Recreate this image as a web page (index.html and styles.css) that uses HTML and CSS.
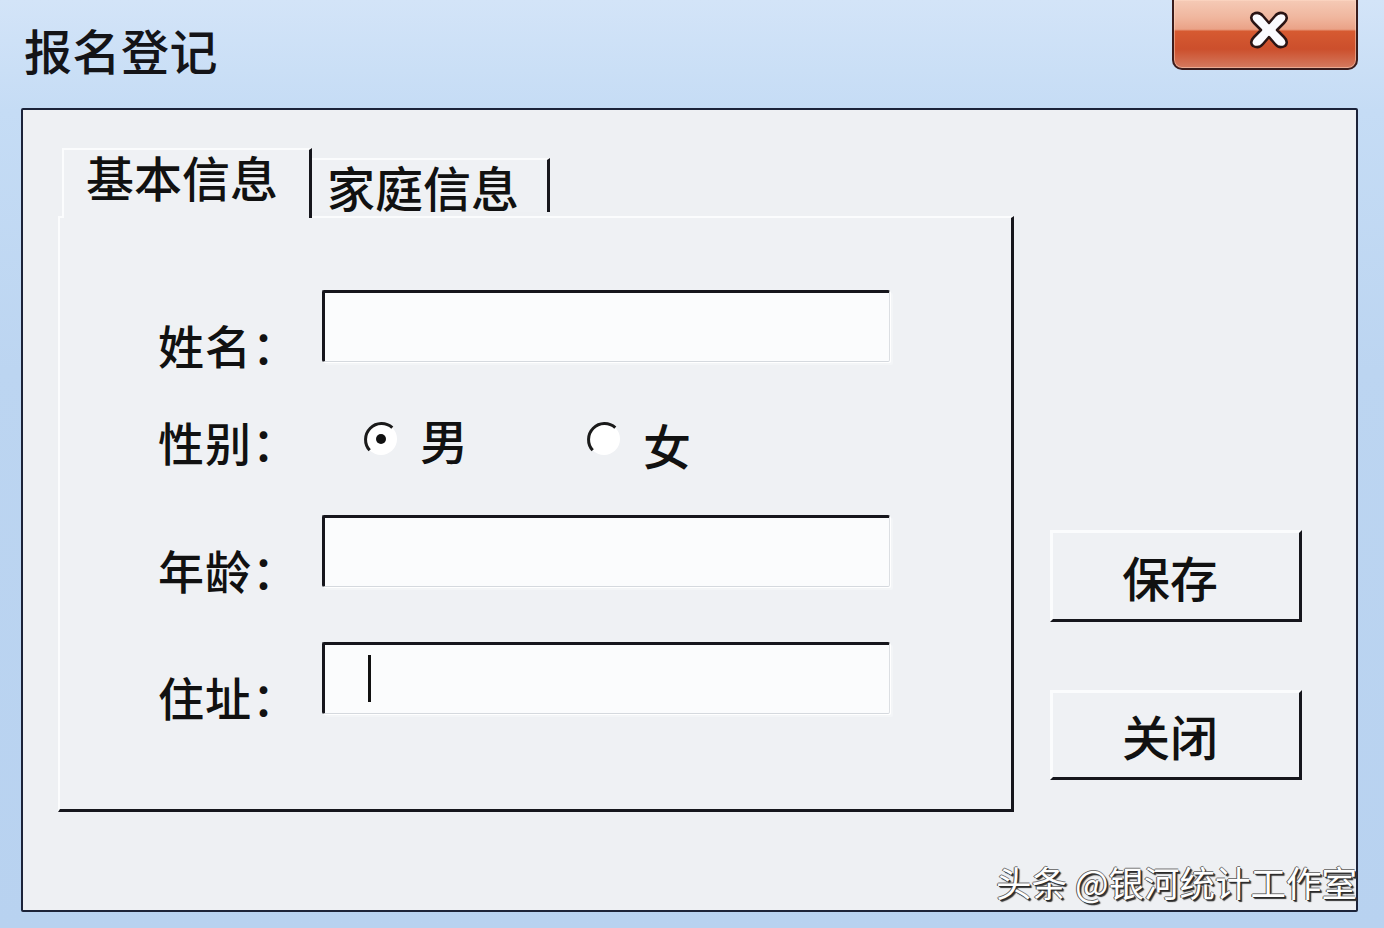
FILE: index.html
```html
<!DOCTYPE html>
<html lang="zh-CN">
<head>
<meta charset="utf-8">
<title>报名登记</title>
<link rel="stylesheet" href="styles.css">
</head>
<body>
<div class="window">
  <div class="titlebar">
    <div class="title">报名登记</div>
    <div class="close">
      <svg class="close-x" width="48" height="42" viewBox="0 0 48 42">
        <path d="M8 5 Q14 2 18 7 L24 14 L30 7 Q34 2 40 5 Q44 9 39 14 L32 21 L39 28 Q44 33 40 37 Q34 40 30 35 L24 28 L18 35 Q14 40 8 37 Q4 33 9 28 L16 21 L9 14 Q4 9 8 5 Z" fill="#fbfbff" stroke="#2a1414" stroke-width="2.5" stroke-linejoin="round"/>
      </svg>
    </div>
  </div>
  <div class="client">
    <div class="left">
      <div class="tabs">
        <div class="tab tab-active">基本信息</div>
        <div class="tab tab-inactive">家庭信息</div>
      </div>
      <div class="panel">
        <div class="form">
          <div class="label label-field">姓名：</div>
          <div class="field"></div>

          <div class="label">性别：</div>
          <div class="radios">
            <div class="option">
              <svg class="radio" width="38" height="38" viewBox="0 0 38 38">
                <circle cx="19" cy="19" r="16" fill="#ffffff"/>
                <path d="M7.7 30.3 A16 16 0 0 1 30.3 7.7" fill="none" stroke="#1a1a1a" stroke-width="3"/>
                <circle cx="19" cy="19" r="5" fill="#111111"/>
              </svg>
              <span class="option-text">男</span>
            </div>
            <div class="option">
              <svg class="radio" width="38" height="38" viewBox="0 0 38 38">
                <circle cx="19" cy="19" r="16" fill="#ffffff"/>
                <path d="M7.7 30.3 A16 16 0 0 1 30.3 7.7" fill="none" stroke="#1a1a1a" stroke-width="3"/>
              </svg>
              <span class="option-text option-text-low">女</span>
            </div>
          </div>

          <div class="label label-field">年龄：</div>
          <div class="field"></div>

          <div class="label label-field">住址：</div>
          <div class="field"><span class="caret"></span></div>
        </div>
      </div>
    </div>
    <div class="buttons">
      <div class="btn">保存</div>
      <div class="btn btn-close">关闭</div>
    </div>
  </div>
</div>
<div class="watermark">头条 @银河统计工作室</div>
</body>
</html>
```

FILE: styles.css
```css
html, body {
  margin: 0;
  padding: 0;
}
body {
  width: 1384px;
  height: 928px;
  overflow: hidden;
  position: relative;
  background: linear-gradient(180deg, #d3e4f8 0%, #c5dcf5 12%, #bcd5f1 40%, #b8d2f0 100%);
  font-family: "Noto Sans CJK SC", "Noto Sans", sans-serif;
  color: #111111;
}
.window {
  box-sizing: border-box;
  height: 928px;
  display: flex;
  flex-direction: column;
  padding: 0 26px 16px 21px;
}
.titlebar {
  height: 108px;
  flex: none;
  display: flex;
  justify-content: space-between;
  align-items: flex-start;
}
.title {
  margin-top: 19px;
  margin-left: 3px;
  font-size: 48px;
  line-height: 60px;
  font-weight: 500;
  color: #141418;
  letter-spacing: 0.5px;
}
.close {
  box-sizing: border-box;
  width: 186px;
  height: 70px;
  border: 2px solid #3a1c1c;
  border-top: none;
  border-radius: 0 0 10px 10px;
  background: linear-gradient(180deg, #f5cab6 0%, #f0b79f 25%, #eaa287 43%, #d65a31 46%, #cc4f2c 72%, #d47a60 100%);
  display: flex;
  justify-content: center;
  align-items: center;
  box-shadow: inset 0 0 0 1px rgba(255, 220, 200, 0.5);
}
.close-x {
  margin-top: -8px;
  margin-left: 8px;
}
.client {
  flex: 1;
  box-sizing: border-box;
  border: 2px solid #1c2339;
  border-radius: 2px;
  background: #eef0f3;
  display: flex;
  padding: 38px 0 0 35px;
}
.left {
  width: 956px;
  display: flex;
  flex-direction: column;
}
.tabs {
  height: 68px;
  display: flex;
  align-items: flex-end;
  position: relative;
  z-index: 1;
}
.tab {
  box-sizing: border-box;
  font-size: 48px;
  font-weight: 500;
  line-height: 52px;
  color: #111111;
  background: #eff1f4;
  border-top: 2px solid #fbfcfd;
  border-right: 3px solid #16161c;
}
.tab-active {
  margin-left: 4px;
  width: 250px;
  height: 70px;
  margin-bottom: -2px;
  border-left: 2px solid #fbfcfd;
  padding-left: 22px;
}
.tab-inactive {
  width: 238px;
  height: 54px;
  padding-left: 15px;
  margin-bottom: 4px;
}
.panel {
  box-sizing: border-box;
  width: 956px;
  height: 596px;
  background: #eff1f4;
  border-top: 2px solid #fbfcfd;
  border-left: 2px solid #fbfcfd;
  border-right: 3px solid #16161c;
  border-bottom: 3px solid #16161c;
  padding: 72px 0 0 98px;
}
.form {
  display: grid;
  grid-template-columns: 164px 568px;
  grid-template-rows: 72px 43px 72px 72px;
  row-gap: 55px;
}
.label {
  font-size: 46px;
  font-weight: 500;
  line-height: 48px;
  color: #111111;
  white-space: nowrap;
  letter-spacing: 1px;
}
.label-field {
  padding-top: 30px;
}
.field {
  box-sizing: border-box;
  height: 72px;
  background: #fbfcfd;
  border-top: 3px solid #16161c;
  border-left: 3px solid #16161c;
  border-right: 1px solid #dcdfe3;
  border-bottom: 1px solid #d5d9de;
  border-radius: 2px;
  box-shadow: 1px 1px 0 #ffffff, 3px 3px 0 #f3f5f7;
  padding: 10px 0 0 43px;
}
.caret {
  display: block;
  width: 3px;
  height: 47px;
  background: #111111;
}
.radios {
  display: flex;
  align-items: center;
}
.option {
  display: flex;
  align-items: center;
}
.option:first-child {
  margin-left: 40px;
  width: 223px;
}
.radio {
  flex: none;
}
.option-text {
  margin-left: 20px;
  font-size: 48px;
  line-height: 48px;
  font-weight: 500;
}
.option-text-low {
  margin-top: 10px;
}
.buttons {
  display: flex;
  flex-direction: column;
  margin-left: 36px;
  padding-top: 382px;
}
.btn {
  box-sizing: border-box;
  width: 252px;
  height: 92px;
  background: #eff1f4;
  border-top: 3px solid #fbfcfd;
  border-left: 3px solid #fbfcfd;
  border-right: 3px solid #16161c;
  border-bottom: 3px solid #16161c;
  font-size: 48px;
  font-weight: 500;
  line-height: 86px;
  text-align: center;
  color: #111111;
  padding-right: 12px;
}
.btn-close {
  margin-top: 68px;
  height: 90px;
  line-height: 84px;
}
.watermark {
  position: absolute;
  left: 996px;
  top: 857px;
  font-size: 35.5px;
  line-height: 50px;
  color: #ffffff;
  white-space: nowrap;
  text-shadow: 1px 1px 0 #2a2a2a, -1px 0 0 #555555, 0 -1px 0 #777777, 2px 2px 1px #333333;
}
```
